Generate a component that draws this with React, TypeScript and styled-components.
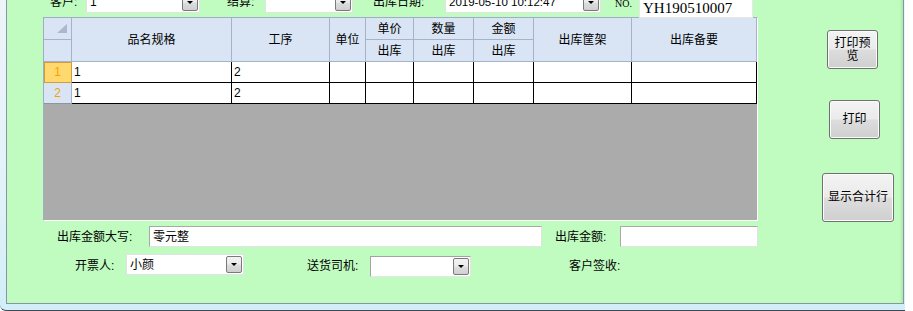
import styled, { createGlobalStyle } from 'styled-components';

const GlobalStyle = createGlobalStyle`
  html, body {
    margin: 0;
    padding: 0;
    background: #fff;
  }
  body {
    font-family: "Liberation Sans", "Noto Sans CJK SC", sans-serif;
    font-size: 12px;
    color: #000;
    overflow: hidden;
  }
  * {
    box-sizing: border-box;
  }
`;

// column widths of the grid, each including its 1px right border
const COLS = [28, 160, 98, 36, 48, 60, 60, 98, 125];
const colTemplate = COLS.map(w => `${w}px`).join(' ');

const ROWS = [
    { no: 1, name: '1', proc: '2', selected: true },
    { no: 2, name: '1', proc: '2', selected: false },
];

// Window chrome
const Window = styled.div`
    width: 905px;
    height: 311px;
    padding: 0 1px 6px 6px;
    display: flex;
    background: linear-gradient(180deg, #eef4f9 0%, #e4f2f9 55%, #d2eef9 100%);
    border-bottom: 1px solid #3e4b56;
    border-bottom-left-radius: 6px;
`;

const Client = styled.div`
    flex: 1;
    display: flex;
    align-items: flex-start;
    background: #c0fcc0;
    border: 1px solid #8795a3;
    border-top: none;
    box-shadow: inset -3px 0 2px -1px rgba(40, 90, 40, 0.12);
`;

const LeftCol = styled.div`
    width: 715px;
    margin-left: 36px;
    display: flex;
    flex-direction: column;
`;

// Top bar (cut off by the top of the picture)
const TopBar = styled.div`
    height: 20px;
    margin-top: -8px;
    padding-left: 7px;
    display: flex;
    align-items: center;
`;

const Label = styled.span<{ $w: number; $ml?: number }>`
    flex: none;
    width: ${p => p.$w}px;
    margin-left: ${p => p.$ml ?? 0}px;
    line-height: 16px;
    white-space: nowrap;
`;

const NoLabel = styled.span<{ $w: number; $ml: number }>`
    flex: none;
    align-self: flex-start;
    width: ${p => p.$w}px;
    margin: 8px 0 0 ${p => p.$ml}px;
    font-family: "Liberation Serif", serif;
    font-size: 10px;
    line-height: 8px;
`;

const Combo = styled.div<{ $w: number; $ml?: number; $sunken?: boolean; $align?: string }>`
    flex: none;
    width: ${p => p.$w}px;
    height: 21px;
    margin-left: ${p => p.$ml ?? 0}px;
    align-self: ${p => p.$align ?? 'center'};
    display: flex;
    align-items: center;
    justify-content: space-between;
    padding: 0 1px 0 3px;
    background: #fff;
    border: 1px solid;
    border-color: ${p => p.$sunken ? '#a3a3a3 #e6e6e6 #e6e6e6 #a3a3a3' : '#e3e3e3'};
`;

const ComboText = styled.span<{ $mono?: boolean }>`
    line-height: 16px;
    white-space: nowrap;
    font-size: ${p => p.$mono ? '11.5px' : '12px'};
`;

const DropBtn = styled.span`
    flex: none;
    width: 16px;
    height: 17px;
    display: flex;
    align-items: center;
    justify-content: center;
    border: 1px solid #7a7a7a;
    border-radius: 2px;
    background: linear-gradient(180deg, #f3f3f3 0%, #ebebeb 48%, #dddddd 52%, #d0d0d0 100%);
    &::after {
        content: '';
        border-left: 3px solid transparent;
        border-right: 3px solid transparent;
        border-top: 3px solid #000;
    }
`;

const NoBox = styled.div<{ $w: number }>`
    flex: none;
    align-self: flex-start;
    position: relative;
    z-index: 1;
    width: ${p => p.$w}px;
    height: 26px;
    padding: 6px 0 0 3px;
    background: #fff;
    border: 1px solid #e8e8e8;
    font-family: "Liberation Serif", serif;
    font-size: 15px;
    line-height: 18px;
`;

// Data grid
const Grid = styled.div`
    width: 715px;
    height: 204px;
    margin-top: 5px;
    background: #ababab;
    border: 1px solid;
    border-color: #a0aec4 #fff #fff #a0aec4;
`;

const HeadGrid = styled.div`
    display: grid;
    grid-template-columns: ${colTemplate};
    grid-template-rows: 22px 22px;
    background: #d9e5f4;
`;

const HeadCell = styled.div<{ $span?: boolean }>`
    grid-row: ${p => p.$span ? 'span 2' : 'auto'};
    display: flex;
    align-items: center;
    justify-content: center;
    border-right: 1px solid #a4b3ca;
    border-bottom: 1px solid #a4b3ca;
    line-height: 16px;
`;

const Corner = styled(HeadCell)`
    align-items: flex-start;
    justify-content: flex-start;
`;

const DataRow = styled.div`
    display: grid;
    grid-template-columns: ${colTemplate};
    height: 21px;
`;

const RowHead = styled.div<{ $selected: boolean }>`
    display: flex;
    align-items: center;
    justify-content: center;
    color: #f5a100;
    background: ${p => p.$selected ? '#ffd86e' : '#d9e5f4'};
    border-right: 1px solid ${p => p.$selected ? '#d29d3c' : '#a4b3ca'};
    border-bottom: 1px solid ${p => p.$selected ? '#d29d3c' : '#8a96a8'};
    box-shadow: ${p => p.$selected ? 'inset 1px 1px 0 #d29d3c' : 'none'};
`;

const DataCell = styled.div`
    display: flex;
    align-items: center;
    padding-left: 2px;
    background: #fff;
    border-right: 1px solid #000;
    border-bottom: 1px solid #000;
`;

// Footer fields
const FieldRow = styled.div<{ $mt: number; $h: number; $pl: number }>`
    height: ${p => p.$h}px;
    margin-top: ${p => p.$mt}px;
    padding-left: ${p => p.$pl}px;
    display: flex;
    align-items: center;
`;

const TextBox = styled.div<{ $w: number; $ml?: number }>`
    flex: none;
    width: ${p => p.$w}px;
    height: 21px;
    margin-left: ${p => p.$ml ?? 0}px;
    padding-left: 3px;
    display: flex;
    align-items: center;
    background: #fff;
    border: 1px solid;
    border-color: #a9a9a9 #e3e3e3 #e3e3e3 #a9a9a9;
    line-height: 16px;
`;

// Right buttons
const ButtonCol = styled.div`
    margin-left: 64px;
    display: flex;
    flex-direction: column;
    align-items: flex-start;
`;

const Button = styled.button<{ $w: number; $h: number; $ml: number; $mt: number }>`
    width: ${p => p.$w}px;
    height: ${p => p.$h}px;
    margin: ${p => p.$mt}px 0 0 ${p => p.$ml}px;
    padding: 0 4px;
    border: 1px solid #707070;
    border-radius: 3px;
    background: linear-gradient(180deg, #f3f3f3 0%, #ebebeb 48%, #dddddd 52%, #cfcfcf 100%);
    box-shadow: inset 0 0 0 1px #fbfbfb;
    font-family: "Liberation Sans", "Noto Sans CJK SC", sans-serif;
    font-size: 12px;
    line-height: 13px;
    color: #000;
`;

function CornerMark() {
    return (
        <svg width="27" height="21" viewBox="0 0 27 21">
            <polygon points="13,15 23,15 23,6" fill="#aab7cc" />
        </svg>
    );
}

export default function App() {
    return (
        <>
            <GlobalStyle />
            <Window>
                <Client>
                    <LeftCol>
                        <TopBar>
                            <Label $w={36}>客户:</Label>
                            <Combo $w={114}>
                                <ComboText>1</ComboText>
                                <DropBtn />
                            </Combo>
                            <Label $w={38} $ml={27}>结算:</Label>
                            <Combo $w={88}>
                                <ComboText />
                                <DropBtn />
                            </Combo>
                            <Label $w={72} $ml={20}>出库日期:</Label>
                            <Combo $w={156}>
                                <ComboText $mono>2019-05-10 10:12:47</ComboText>
                                <DropBtn />
                            </Combo>
                            <NoLabel $w={24} $ml={14}>NO.</NoLabel>
                            <NoBox $w={114}>YH190510007</NoBox>
                        </TopBar>

                        <Grid>
                            <HeadGrid>
                                <Corner><CornerMark /></Corner>
                                <HeadCell $span>品名规格</HeadCell>
                                <HeadCell $span>工序</HeadCell>
                                <HeadCell $span>单位</HeadCell>
                                <HeadCell>单价</HeadCell>
                                <HeadCell>数量</HeadCell>
                                <HeadCell>金额</HeadCell>
                                <HeadCell $span>出库筐架</HeadCell>
                                <HeadCell $span>出库备要</HeadCell>
                                <HeadCell />
                                <HeadCell>出库</HeadCell>
                                <HeadCell>出库</HeadCell>
                                <HeadCell>出库</HeadCell>
                            </HeadGrid>
                            {ROWS.map(row => (
                                <DataRow key={row.no}>
                                    <RowHead $selected={row.selected}>{row.no}</RowHead>
                                    <DataCell>{row.name}</DataCell>
                                    <DataCell>{row.proc}</DataCell>
                                    <DataCell />
                                    <DataCell />
                                    <DataCell />
                                    <DataCell />
                                    <DataCell />
                                    <DataCell />
                                </DataRow>
                            ))}
                        </Grid>

                        <FieldRow $mt={5} $h={21} $pl={14}>
                            <Label $w={92}>出库金额大写:</Label>
                            <TextBox $w={393}>零元整</TextBox>
                            <Label $w={65} $ml={13}>出库金额:</Label>
                            <TextBox $w={138} />
                        </FieldRow>

                        <FieldRow $mt={7} $h={23} $pl={32}>
                            <Label $w={51}>开票人:</Label>
                            <Combo $w={118} $align="flex-start">
                                <ComboText>小颜</ComboText>
                                <DropBtn />
                            </Combo>
                            <Label $w={63} $ml={63}>送货司机:</Label>
                            <Combo $w={101} $align="flex-end" $sunken>
                                <ComboText />
                                <DropBtn />
                            </Combo>
                            <Label $w={60} $ml={98}>客户签收:</Label>
                        </FieldRow>
                    </LeftCol>

                    <ButtonCol>
                        <Button $w={51} $h={39} $ml={5} $mt={30}>打印预览</Button>
                        <Button $w={51} $h={39} $ml={7} $mt={31}>打印</Button>
                        <Button $w={72} $h={49} $ml={0} $mt={34}>显示合计行</Button>
                    </ButtonCol>
                </Client>
            </Window>
        </>
    );
}
